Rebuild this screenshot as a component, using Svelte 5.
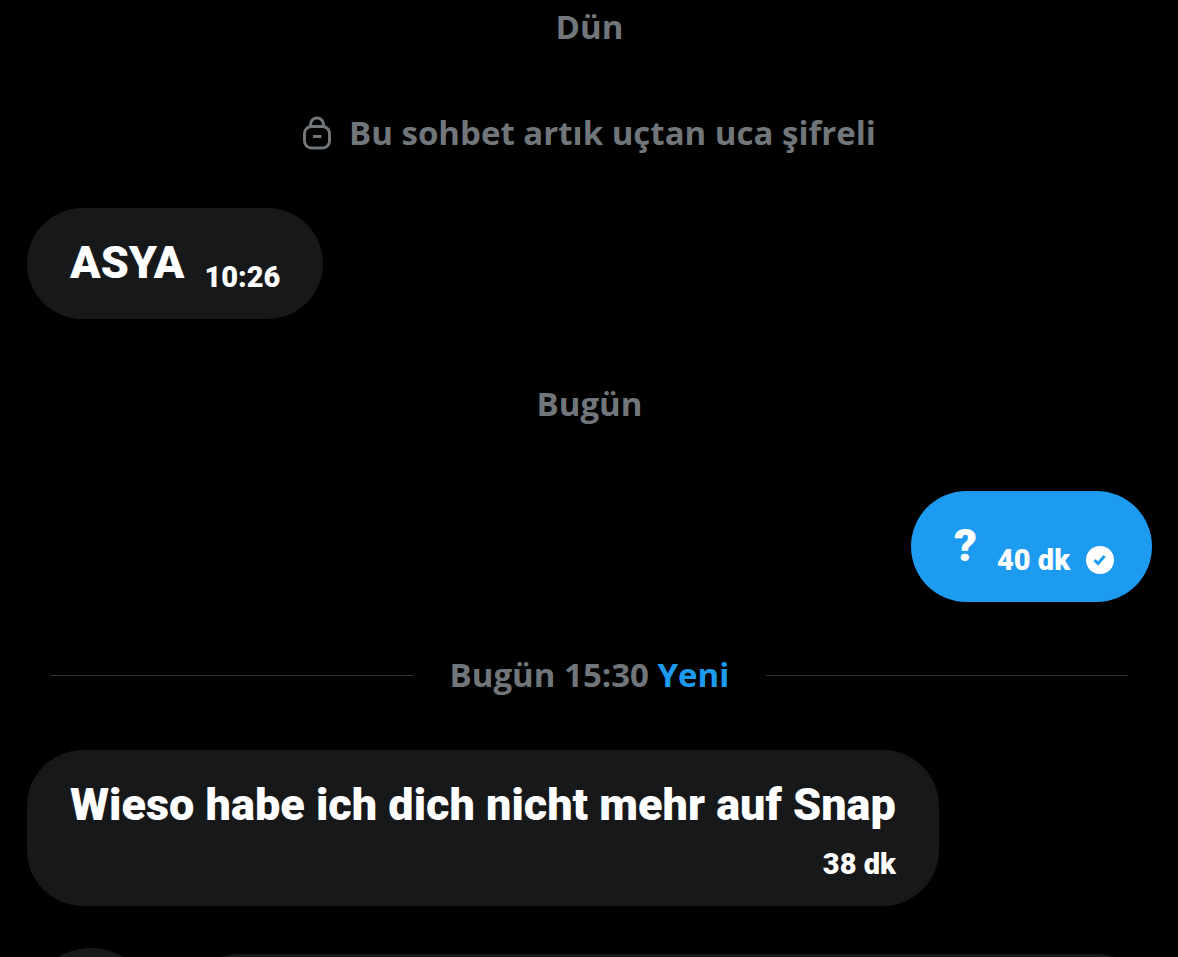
<script>
  const incoming = { text: 'ASYA', time: '10:26' };
  const outgoing = { text: '?', time: '40 dk' };
  const latest = { text: 'Wieso habe ich dich nicht mehr auf Snap', time: '38 dk' };
</script>

<main class="chat">
  <h2 class="day">Dün</h2>

  <p class="notice">
    <svg class="lock" viewBox="0 0 28 34" aria-hidden="true">
      <rect x="1.500" y="10.500" width="25" height="21.500" rx="7" />
      <path d="M7.500 10.500V8.500a6.500 6.500 0 0 1 13 0v2" />
      <path d="M10 20.500h8.500" />
    </svg>
    <span>Bu sohbet artık uçtan uca şifreli</span>
  </p>

  <article class="bubble">
    <p class="text">{incoming.text}</p>
    <time>{incoming.time}</time>
  </article>

  <h2 class="day middle">Bugün</h2>

  <article class="bubble own">
    <p class="text">{outgoing.text}</p>
    <time>{outgoing.time}</time>
    <svg class="sent" viewBox="0 0 28 28" aria-hidden="true">
      <circle cx="14" cy="14" r="14" />
      <path d="M8.500 14l3.500 3.500 6.500-7.500" />
    </svg>
  </article>

  <h2 class="day divider"><span>Bugün 15:30 <b>Yeni</b></span></h2>

  <article class="bubble stacked">
    <p class="text">{latest.text}</p>
    <time>{latest.time}</time>
  </article>

  <div class="next">
    <div class="avatar"></div>
    <div class="composer"></div>
  </div>
</main>

<style>
  :global(body) {
    margin: 0;
    background: #000;
    overflow: hidden;
  }
  .chat {
    box-sizing: border-box;
    height: 100vh;
    overflow: hidden;
    display: flex;
    flex-direction: column;
    padding: 4px 26px 0 27px;
    color: #fff;
    font-family: Roboto, sans-serif;
    font-weight: 900;
  }
  .chat > * {
    flex-shrink: 0;
  }
  p,
  h2 {
    margin: 0;
  }
  .day,
  .notice {
    font-family: 'Open Sans', sans-serif;
    font-size: 33px;
    line-height: 46px;
    font-weight: 700;
    color: #71767b;
    text-align: center;
  }
  .notice {
    display: flex;
    justify-content: center;
    align-items: center;
    gap: 18px;
    margin: 60px 0 52px;
  }
  .lock {
    width: 28px;
    height: 34px;
    fill: none;
    stroke: #71767b;
    stroke-width: 3;
  }
  .bubble {
    box-sizing: border-box;
    display: flex;
    align-items: flex-end;
    align-self: flex-start;
    padding: 27px 43px 24px;
    border-radius: 56px;
    background: #16181a;
  }
  .text {
    margin-bottom: 4px;
    font-size: 45px;
    line-height: 56px;
  }
  time {
    font-size: 29px;
    line-height: 36px;
    margin-left: 20px;
  }
  .middle {
    margin: 62px 0 64px;
  }
  .own {
    align-self: flex-end;
    padding-right: 38px;
    background: #1d9bf0;
  }
  .sent {
    width: 28px;
    height: 28px;
    margin: 0 0 4px 16px;
    fill: #fff;
  }
  .sent path {
    fill: none;
    stroke: #1d9bf0;
    stroke-width: 3;
  }
  .divider {
    display: flex;
    align-items: center;
    gap: 37px;
    margin: 50px 24px 52px;
  }
  .divider::before,
  .divider::after {
    content: '';
    flex: 1;
    height: 1px;
    background: #2f3336;
  }
  b {
    font-weight: inherit;
    color: #1d9bf0;
  }
  .stacked {
    flex-direction: column;
    gap: 9px;
  }
  .next {
    display: flex;
    align-items: flex-start;
    gap: 28px;
    margin-top: 42px;
  }
  .avatar {
    width: 128px;
    height: 128px;
    border-radius: 50%;
    background: #181818;
  }
  .composer {
    flex: 1;
    height: 112px;
    margin-top: 6px;
    border-radius: 56px;
    background: #16181a;
  }
</style>
